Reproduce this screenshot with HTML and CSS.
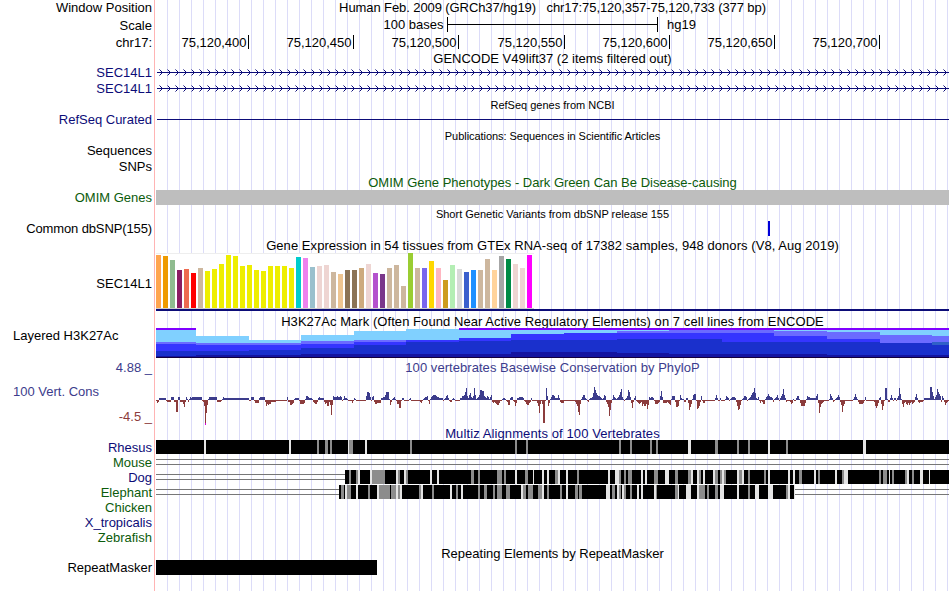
FILE: index.html
```
<!DOCTYPE html>
<html lang="en">
<head>
    <meta charset="UTF-8">
    <title>Human chr17:75,120,357-75,120,733</title>
    <link rel="stylesheet" href="styles.css">
</head>
<body>
    <div class="browser">
        <div class="row h16"><div class="label">Window Position</div><div class="title pos">Human Feb. 2009 (GRCh37/hg19)&nbsp;&nbsp; chr17:75,120,357-75,120,733 (377 bp)</div></div>
        <div class="row h17"><div class="label">Scale</div><svg id="scale"></svg></div>
        <div class="row h18"><div class="label">chr17:</div><svg id="ruler"></svg></div>

        <div class="row h13"><div class="label"></div><div class="title">GENCODE V49lift37 (2 items filtered out)</div></div>
        <div class="row h16 navy"><div class="label low">SEC14L1</div><svg class="gene"></svg></div>
        <div class="row h16 navy"><div class="label low">SEC14L1</div><svg class="gene"></svg></div>

        <div class="row h16"><div class="label"></div><div class="title small">RefSeq genes from NCBI</div></div>
        <div class="row h15 navy"><div class="label">RefSeq Curated</div><svg id="refseq"></svg></div>

        <div class="row h16"><div class="label"></div><div class="title small publications">Publications: Sequences in Scientific Articles</div></div>
        <div class="row h16"><div class="label">Sequences</div></div>
        <div class="row h15"><div class="label">SNPs</div></div>

        <div class="row h16 green"><div class="label"></div><div class="title low">OMIM Gene Phenotypes - Dark Green Can Be Disease-causing</div></div>
        <div class="row h15 green"><div class="label">OMIM Genes</div><div class="omim-bar"></div></div>

        <div class="row h16"><div class="label"></div><div class="title small">Short Genetic Variants from dbSNP release 155</div></div>
        <div class="row h16"><div class="label dbsnp-name">Common dbSNP(155)</div><svg id="dbsnp"></svg></div>

        <div class="row h16"><div class="label"></div><div class="title low gtex-title">Gene Expression in 54 tissues from GTEx RNA-seq of 17382 samples, 948 donors (V8, Aug 2019)</div></div>
        <div class="row h58"><div class="label">SEC14L1</div><svg id="gtex"></svg></div>

        <div class="row h17"><div class="label"></div><div class="title low h3k-title">H3K27Ac Mark (Often Found Near Active Regulatory Elements) on 7 cell lines from ENCODE</div></div>
        <div class="row h30"><div class="label left">Layered H3K27Ac</div><svg id="h3k27ac"></svg></div>

        <div class="row h18 blue"><div class="label">4.88 _</div><div class="title phylop-title">100 vertebrates Basewise Conservation by PhyloP</div></div>
        <div class="row h49">
            <div class="label cons">
                <div class="cons-name">100 Vert. Cons</div>
                <div class="cons-min">-4.5 _</div>
            </div>
            <svg id="phylop"></svg>
        </div>

        <div class="row h15 navy"><div class="label"></div><div class="title low multiz-title">Multiz Alignments of 100 Vertebrates</div></div>
        <div class="row h15 navy"><div class="label">Rhesus</div><svg id="rhesus"></svg></div>
        <div class="row h15 green"><div class="label">Mouse</div><svg id="mouse"></svg></div>
        <div class="row h15 navy"><div class="label">Dog</div><svg id="dog"></svg></div>
        <div class="row h15 green"><div class="label">Elephant</div><svg id="elephant"></svg></div>
        <div class="row h15 green"><div class="label">Chicken</div></div>
        <div class="row h15 navy"><div class="label">X_tropicalis</div></div>
        <div class="row h15 green"><div class="label">Zebrafish</div></div>

        <div class="row h15"><div class="label"></div><div class="title low">Repeating Elements by RepeatMasker</div></div>
        <div class="row h15"><div class="label">RepeatMasker</div><div class="repeat-bar"></div></div>
    </div>
    <script src="tracks.js"></script>
</body>
</html>
```
FILE: styles.css
```
* {
    box-sizing: border-box;
    margin: 0;
    padding: 0;
}

body {
    width: 950px;
    height: 591px;
    background-color: #fff;
    color: #000;
    font-family: "Liberation Sans", Arial, Helvetica, sans-serif;
    font-size: 13px;
    overflow: hidden;
}

.browser {
    width: 949px;
    height: 591px;
    /* pink edge of the label column, then a guide line every 12px */
    background-image:
        linear-gradient(#ffb4b4, #ffb4b4),
        repeating-linear-gradient(to right, #fff 0, #fff 11px, #dcdcf8 11px, #dcdcf8 12px);
    background-repeat: no-repeat;
    background-size: 1px 100%, 793px 100%;
    background-position: 154px 0, 156px 0;
}

.row {
    display: flex;
}

.label {
    width: 152px;
    margin-right: 4px;
    flex: none;
    text-align: right;
    white-space: nowrap;
}

.label.left {
    padding-left: 13px;
    text-align: left;
    line-height: 16px;
}

.title {
    width: 793px;
    text-align: center;
    white-space: nowrap;
}

.small {
    font-size: 11px;
    padding-top: 1px;
}

.low {
    padding-top: 1px;
}

svg {
    display: block;
    flex: none;
}

.h13 { height: 13px; line-height: 15px; }
.h15 { height: 15px; line-height: 16px; }
.h16 { height: 16px; line-height: 16px; }
.h17 { height: 17px; line-height: 19px; }
.h18 { height: 18px; line-height: 19px; }
.h30 { height: 30px; }
.h49 { height: 49px; }
.h58 { height: 58px; line-height: 61px; }

.pos { letter-spacing: -0.09px; }
.publications { letter-spacing: -0.05px; }
.gtex-title { letter-spacing: 0.06px; }
.h3k-title { letter-spacing: 0.06px; }
.phylop-title { letter-spacing: 0.05px; }
.multiz-title { letter-spacing: 0.1px; }
.dbsnp-name { letter-spacing: -0.12px; }

.navy { color: #0c0c78; }
.green { color: #0b5b0b; }
.blue { color: #3c3c8c; }

.cons-name {
    padding-left: 13px;
    text-align: left;
    line-height: 32px;
    color: #3c3c8c;
}

.cons-min {
    line-height: 18px;
    color: #8c3c3c;
}

.omim-bar {
    width: 793px;
    height: 15px;
    background-color: #bebebe;
}

.repeat-bar {
    width: 221px;
    height: 15px;
    background-color: #000;
}
```
FILE: tracks.js
```
const LEFT = 156;
const WIDTH = 793;

function setup(svg, height) {
    svg.setAttribute('width', WIDTH);
    svg.setAttribute('height', height);
    svg.setAttribute('viewBox', `${LEFT} 0 ${WIDTH} ${height}`);
    svg.setAttribute('shape-rendering', 'crispEdges');
}

function rect(x, y, w, h, fill) {
    return `<rect x="${x}" y="${y}" width="${w}" height="${h}" fill="${fill}"/>`;
}

function draw(id, height, html) {
    const svg = document.getElementById(id);
    setup(svg, height);
    svg.innerHTML = html;
}

// scale bar
draw('scale', 17,
    '<text x="443.5" y="13" text-anchor="end">100 bases</text><text x="667" y="13">hg19</text>' +
    rect(447, 1, 1, 15, '#000') + rect(657, 1, 1, 15, '#000') + rect(447, 8, 211, 1, '#000'));

// base positions
const ticks = [248, 353, 458, 564, 669, 774, 879];
draw('ruler', 18, ticks.map((x, i) =>
    `<text x="${x - 1.5}" y="14" text-anchor="end">75,120,${400 + i * 50}</text>` + rect(x, 2, 1, 14, '#000')
).join(''));

// intron lines with strand arrows
document.querySelectorAll('.gene').forEach(svg => {
    setup(svg, 16);
    let html = rect(157, 8, 792, 1, '#0c0c78');
    for (let x = 162; x < 949; x += 8) {
        for (let d = 1; d <= 3; d++) {
            html += rect(x - d, 8 - d, 1, 1, d === 3 ? '#7c7cb8' : '#0c0c78');
            html += rect(x - d, 8 + d, 1, 1, d === 3 ? '#7c7cb8' : '#0c0c78');
        }
    }
    svg.innerHTML = html;
});

draw('refseq', 15, rect(157, 7, 792, 1, '#0c0c78'));
draw('dbsnp', 16, rect(768, 0, 2, 15, '#0000d8'));

// GTEx: [color, height]
const tissues = [
    ['#ffa54f', 53], ['#ee9a00', 52], ['#8fbc8f', 48], ['#8b1c62', 38], ['#ee6a50', 39], ['#ff0000', 35],
    ['#cdb79e', 40], ['#eeee00', 37], ['#eeee00', 39], ['#eeee00', 44], ['#eeee00', 53], ['#eeee00', 52],
    ['#eeee00', 42], ['#eeee00', 43], ['#eeee00', 38], ['#eeee00', 37], ['#eeee00', 42], ['#eeee00', 42],
    ['#eeee00', 42], ['#eeee00', 40], ['#00cdcd', 51], ['#ee82ee', 50], ['#9ac0cd', 41], ['#eed5d2', 42],
    ['#eed5d2', 43], ['#cdb79e', 36], ['#eec591', 34], ['#8b7355', 38], ['#8b7355', 38], ['#cdaa7d', 40],
    ['#eed5d2', 44], ['#b452cd', 35], ['#7a378b', 34], ['#cdb79e', 40], ['#cdb79e', 43], ['#cdb79e', 22],
    ['#9acd32', 55], ['#cdb79e', 40], ['#7a67ee', 40], ['#ffd700', 47], ['#ffb6c1', 40], ['#cd9b1d', 28],
    ['#b4eeb4', 43], ['#d9d9d9', 39], ['#3a5fcd', 36], ['#1e90ff', 38], ['#cdb79e', 38], ['#cdb79e', 49],
    ['#ffd39b', 38], ['#a6a6a6', 52], ['#008b45', 49], ['#eed5d2', 44], ['#eed5d2', 40], ['#ff00ff', 53]
];
draw('gtex', 58,
    rect(156, 0, 378, 55, '#fff') + rect(156, 0, 378, 1, '#eee') + rect(156, 55, 378, 1, '#ccc') +
    tissues.map((t, i) => rect(156 + i * 7, 55 - t[1], 5, t[1], t[0])).join('') +
    rect(156, 56, 793, 2, '#0c0c78'));

// H3K27Ac: x, then the top of each layer (null = hidden)
const layers = ['#8000ff', '#80d0ff', '#6b6bff', '#3535ff', '#1a30cc', '#1414a0', '#14003c'];
const marks = [
    [156, 0, 2, 14, 16, 23, 28, 29],
    [196, null, 8, 15, 17, 23, 27, 29],
    [249, null, 12, 15, 17, 22, 27, 29],
    [301, null, 7, 13, 16, 20, 26, 29],
    [354, null, 3, 12, 14, 17, 26, 29],
    [406, null, 1, null, 12, 14, 26, 29],
    [459, 0, 2, null, 10, 13, 26, 29],
    [511, 0, 2, null, 6, 12, 24, 29],
    [564, 0, 2, null, 5, 12, 24, 29],
    [617, 0, 2, 3, 5, 11, 25, 29],
    [669, 0, null, 2, 5, 11, 26, 29],
    [722, 0, null, 2, 5, 14, 26, 29],
    [774, 0, 2, 3, 8, 14, 26, 29],
    [827, 0, 2, 4, 11, 14, 27, 29],
    [880, 0, 2, 7, null, 15, 27, 29],
    [932, 0, 2, 8, null, 17, 27, 29],
    [949]
];
let bands = '';
for (let i = 0; i < marks.length - 1; i++) {
    const x = marks[i][0];
    const w = marks[i + 1][0] - x;
    layers.forEach((color, k) => {
        const top = marks[i][k + 1];
        if (top !== null) bands += rect(x, top, w, 30 - top, color);
    });
}
bands += rect(932, 14, 17, 3, '#3060c8');
draw('h3k27ac', 30, bands);

// PhyloP: start x, then the height of each pixel column
const peaks = {
    156: [-1, -3, -2, 2, 2, 2, 2, 2, 2, 2], 167: [-2, -2, -2, -2, 3, 3, 3, -2, -2, -12, -12, 3, 3],
    180: [-2, -2, -2, -4, -7, -2, 3, 1, -2, 1, 3, 2, 3, 3, 3, 3, 3, 3, 3, 3, 3, 3],
    203: [-2, -6, -24, -13, -5, 1, 3, 3, 3, 3, 3, 3, 3, 3, -2, -2, -2, -2, -1, 1, 3],
    251: [3, 3, 3, -1, -3, -3, -3, -3, 2, 3, 3, 3, 3, 3],
    265: [-2, -6, -4, -5, -4, -4, -2, -2, -2, -2, -2], 287: [3, -2, -2, -5, -5, -4, -3, 1, 2, 2, 2, 2, -1, -4, -4, -4, -4, -3],
    305: [1, 4, 4, 3, 2, 2, 2, 1, -2, -3, -4, -4, -2, 2, 3, 2, 2, 2, 2, -2, -4, -3, -6, -6, -2, -5, -15, -5, 4, 3, 3, 3, 4, 3, 3, 4, 3, -1, 1, 4, 2, 2, 1],
    350: [-1, -1, -3, -1, 2, 1], 366: [4, 8, 8, 7, 3, -1, 3, 4, -2, -4, -4, -3, -3, -3, -3, 2, 2, 3, 3, 5, 8, 8, 8, 1, -5, -2, 1, 2, 3, 1, -1, -4, -4, -8, -8, -1, 2, 2],
    409: [1, 2], 419: [-1, -2, -3, -1, 1, 2, 3, 3, 4, -1, -4, 1, 3, 4, 5, 5, 5, 4, 3, 3, 2, 2, 2, 2, -1, 1, 2, 4, 5, 2, -1, -2, -2, 1, 2, 1],
    460: [2, 2, 4, 4, 5, 8, 12, 4, 2, 5, 7, 3, 2, 4, 12, 5, 1, 2, 3, 5, 10, 10, 9, 9, 4, 3, 2, 4, 3, 1, 3, 5, -2, -3, -2, -3, -4, -5, -5, -3, -1],
    502: [1, 2, 2, 1, -1, -2, -5, -5, 2, 3, 3, -1, -2, -6, -3, 2, 2, 3, 3, 3, 3, 2, -1, -2, -4, -5, -5, -3, -2, 2],
    536: [-1, -3, -6, -13, -4, -1, -4, -23, -23, -1, 12, 4, -6, -3, 1, 3, 5, 5, 4, 2, 2, 2, 5, 2, -2, -3, -3, -3],
    575: [-2, -4, -6, -12, -15, -4, 1, 3, 5, 5, 2, 1, -1, -2, 1, 2, 2, 3, 7, 13, 10, 7, 5, 4, 4, 3, 2, 1, 2, 5, 4, -2, -4, -7, -16, -10, -3, 1, 5, 3, 2, 1, 2, 3, 5, 8, 11, 3, 1, -1, 1, 2, 4, 10, 8, 3, -3, -8, -2, 2, 4, -1, -2, -3, -4, -3, -2, -6, -4, -6, -6, -4, -9, -5, 3],
    650: [2, 3, 3, 2, -1, -4, -4, -4, -3, -2, 4, 9, 3, -3, -3, -3, -3, -2, -3, -4, -5, 1, 4, 4, 4, -2, -7, -7, -6, -1, 5, 2, 1, 1, -2, -2, 2, 2, -3, -10, -7, -4, 1, 5, 6, 6, -1, -9, -8, -6, -2, 4, -1, -3, -3],
    715: [2, 5, 2], 720: [2], 725: [1, 4, 3, 2, -1, 1, 2, 3, 3, 3, 2, -2, -6, -10, -9, -5, -1, 1, 2, 4, 4, 3, -1, 1, 2, 3, 5, 7, 8, 12, 7, 2, 1, 3, -1, -3, -1, -2, -4, -4, 1, 3, 4, 6, 4, 3, 3, 2, -2, 1, 2, 3, 5, 2, -1, 2, 4, 6, 11, 5, 2, -2, -1, -1, -1, -2, -4, -3, 1],
    796: [2, 4, 4, 1, -3, -6, -6, -6, -6, -3, 1, 4, 3, 3, 2, 2, 2, 2, 2, 2, 4, 6, -3, -13, -7, -4, -3, -2],
    829: [1, 6, 4, 2, -2, -1, 1, 2, 3, 5, 3, -2, -5, -12, -6, -4], 853: [1, 3, 6, 3, 1, -2, -4, -4, -4, -4, -3, -1, 3], 874: [-2, -6, -8, -6, -3, 2, 3, -4, -10, -6, -1, 12, 12, 1, -2, -2, 2, 5, 2, -1, 2, 2, -1, 2, 4, 12, 6, 1, -4, -7, -3, -2, -4, -5, -3, -5, -3, -2, -4, -3, -2, 3, 6, 2, -2, -3, -2, -2, -2],
    924: [2, 2, 2, 2, 2, 2, 13, 13, 8, 4, 1, 3, 5, 11, 8, 6, 4, -2, 4, 2, -2, -5, -3, -2]
};
const heights = new Array(WIDTH).fill(-1);
for (let x = 223; x < 249; x++) heights[x - LEFT] = 2;
for (const start in peaks) {
    peaks[start].forEach((v, i) => { heights[start - LEFT + i] = v; });
}
draw('phylop', 49, heights.slice(0, WIDTH).map((v, i) => v > 0
    ? rect(LEFT + i, 24 - v, 1, v, '#3c3c8c')
    : rect(LEFT + i, 24, 1, -v, '#8c3c3c')).join('') + rect(205, 47, 1, 2, '#d800d8'));

// Multiz: black blocks with light and grey stripes as [x, width]
function alignment(id, start, end, light, grey) {
    let html = rect(156, 4, 793, 1, '#777') + rect(156, 9, 793, 1, '#777');
    if (end > start) html += rect(start, 0, end - start, 14, '#000');
    grey.forEach(([x, w]) => { html += rect(x, 0, w, 14, '#8c8c8c'); });
    light.forEach(([x, w]) => { html += rect(x, 0, w, 14, '#e4e4e4'); });
    draw(id, 15, html);
}

alignment('rhesus', 156, 949,
    [[204, 2], [289, 2], [348, 1], [365, 2], [688, 3], [768, 2], [863, 3]],
    [[317, 2], [325, 3], [330, 2], [349, 4], [410, 2], [515, 2], [526, 2], [619, 2], [630, 2], [650, 2],
     [656, 2], [715, 3], [737, 2], [748, 2], [786, 2]]);
alignment('mouse', 0, 0, [], []);
alignment('dog', 345, 949,
    [[358, 2], [370, 2], [396, 2], [404, 2], [430, 2], [437, 2], [515, 2], [533, 1], [542, 2], [547, 2],
     [558, 2], [566, 2], [608, 2], [615, 4], [641, 2], [645, 2], [665, 4], [691, 2], [697, 2], [703, 2],
     [713, 2], [722, 2], [737, 2], [742, 2], [768, 2], [788, 2], [793, 2], [814, 2], [835, 2], [844, 4],
     [889, 1], [907, 2], [920, 3], [929, 1]],
    [[349, 2], [356, 2], [372, 13], [398, 2], [406, 2], [471, 3], [478, 2], [497, 5], [504, 2], [525, 3],
     [555, 3], [577, 2], [619, 2], [624, 2], [628, 4], [654, 4], [675, 3], [688, 3], [699, 2], [715, 3],
     [720, 2], [724, 2], [739, 3], [748, 2], [764, 2], [799, 3], [818, 2], [842, 2], [879, 2], [883, 4],
     [892, 2], [905, 2], [912, 2]]);
alignment('elephant', 339, 794,
    [[345, 2], [356, 2], [377, 2], [396, 2], [400, 2], [421, 2], [450, 2], [461, 2], [521, 2], [542, 2],
     [566, 2], [606, 4], [617, 2], [622, 2], [637, 2], [641, 2], [654, 2], [678, 1], [686, 5], [697, 2],
     [720, 4], [737, 2], [755, 4], [768, 5], [788, 2], [794, 1]],
    [[341, 3], [347, 4], [368, 2], [379, 11], [391, 5], [398, 2], [419, 2], [432, 2], [456, 2], [478, 2],
     [484, 3], [493, 2], [497, 5], [506, 4], [523, 3], [528, 5], [538, 4], [547, 2], [560, 2], [575, 3],
     [579, 3], [612, 3], [619, 2], [624, 2], [630, 2], [656, 1], [675, 3], [699, 6], [707, 2], [715, 3],
     [748, 2], [786, 2]]);
```
